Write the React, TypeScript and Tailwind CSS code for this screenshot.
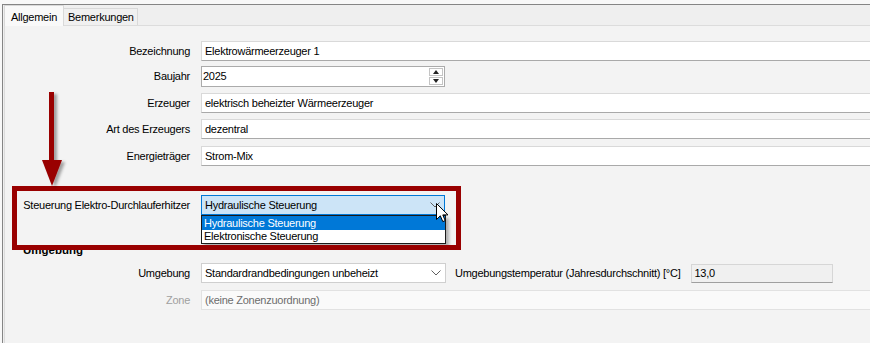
import type { ReactNode } from 'react';

// Windows-Forms-Dialog "Allgemein" mit aufgeklappter Steuerungs-Auswahl
const font = "font-['Liberation_Sans',Arial,sans-serif]";

function Label({ children, muted }: { children: ReactNode; muted?: boolean }) {
  return (
    <div className={`w-[186px] shrink-0 pr-[1px] text-right ${muted ? 'text-[#a0a0a0]' : 'text-black'}`}>
      {children}
    </div>
  );
}

function TextBox({ value }: { value: string }) {
  return (
    <div className="ml-[10px] flex h-[20px] w-[700px] shrink-0 items-center border border-[#d9d9d9] border-b-[#a9a9a9] bg-white pl-[3px]">
      {value}
    </div>
  );
}

function Chevron() {
  return (
    <svg width="10" height="6" viewBox="0 0 10 6" className="shrink-0">
      <polyline points="0.5,0.5 5,5 9.5,0.5" fill="none" stroke="#606060" strokeWidth="1" />
    </svg>
  );
}

export default function App() {
  return (
    <div className={`relative h-[343px] w-[870px] overflow-hidden bg-[#f8f8f8] pl-[2px] pt-[4px] text-[11px] tracking-[-0.25px] text-black ${font}`}>
      <div className="flex h-full flex-col border-l border-t border-[#858585] bg-[#efefef]">
        {/* Reiter */}
        <div className="flex h-[20px] shrink-0 items-end">
          <div className="relative z-10 -mb-px ml-[1px] flex h-[21px] w-[60px] items-start border border-b-0 border-[#d9d9d9] bg-[#f9f9f9] pl-[6px] pt-[3px]">
            Allgemein
          </div>
          <div className="flex h-[17px] w-[74px] items-center border border-l-0 border-b-0 border-[#d9d9d9] bg-[#f0f0f0] pl-[4px] pt-px">
            Bemerkungen
          </div>
        </div>

        {/* Inhalt */}
        <div className="ml-[1px] flex flex-1 flex-col border-l border-t border-[#dcdcdc] bg-[#f3f3f3]">
          <div className="mt-[15px] flex items-center">
            <Label>Bezeichnung</Label>
            <TextBox value="Elektrowärmeerzeuger 1" />
          </div>

          <div className="mt-[5px] flex items-center">
            <Label>Baujahr</Label>
            <div className="ml-[10px] flex h-[21px] w-[244px] shrink-0 items-center justify-between border border-[#ababab] bg-white pl-[1px] pr-px">
              <span>2025</span>
              <div className="flex flex-col gap-px">
                <div className="flex h-[8px] w-[14px] items-center justify-center border border-[#c4c4c4] bg-white">
                  <svg width="6" height="4" viewBox="0 0 6 4"><polygon points="3,0 6,4 0,4" fill="#222" /></svg>
                </div>
                <div className="flex h-[8px] w-[14px] items-center justify-center border border-[#c4c4c4] bg-white">
                  <svg width="6" height="4" viewBox="0 0 6 4"><polygon points="0,0 6,0 3,4" fill="#222" /></svg>
                </div>
              </div>
            </div>
          </div>

          <div className="mt-[6px] flex items-center">
            <Label>Erzeuger</Label>
            <TextBox value="elektrisch beheizter Wärmeerzeuger" />
          </div>

          <div className="mt-[6px] flex items-center">
            <Label>Art des Erzeugers</Label>
            <TextBox value="dezentral" />
          </div>

          <div className="mt-[7px] flex items-center">
            <Label>Energieträger</Label>
            <TextBox value="Strom-Mix" />
          </div>

          {/* Steuerung mit geöffneter Liste */}
          <div className="mt-[29px] flex items-center">
            <Label>Steuerung Elektro-Durchlauferhitzer</Label>
            <div className="relative ml-[10px] flex h-[20px] w-[244px] shrink-0 items-center justify-between border border-[#0078d7] bg-[#cce4f7] pl-[3px] pr-[4px]">
              <span>Hydraulische Steuerung</span>
              <Chevron />
              <div className="absolute left-[-1px] top-[19px] z-20 w-[245px] border border-[#1a1a1a] bg-white shadow-[3px_3px_3px_rgba(0,0,0,0.28)]">
                <div className="flex h-[14px] items-center bg-[#0078d7] pl-[2px] text-white">Hydraulische Steuerung</div>
                <div className="flex h-[13px] items-center pl-[2px]">Elektronische Steuerung</div>
              </div>
            </div>
          </div>

          <div className="mt-[28px] h-[14px] pl-[18px] text-[11.5px] font-bold leading-[14px] tracking-normal">Umgebung</div>

          <div className="mt-[6px] flex items-center">
            <Label>Umgebung</Label>
            <div className="ml-[10px] flex h-[20px] w-[245px] shrink-0 items-center justify-between border border-[#cfcfcf] bg-white pl-[3px] pr-[4px]">
              <span>Standardrandbedingungen unbeheizt</span>
              <Chevron />
            </div>
            <div className="ml-[9px] shrink-0">Umgebungstemperatur (Jahresdurchschnitt) [°C]</div>
            <div className="ml-[11px] flex h-[19px] w-[142px] shrink-0 items-center border border-[#d6d6d6] border-b-[#9f9f9f] bg-[#f0f0f0] pl-[2px]">
              13,0
            </div>
          </div>

          <div className="mt-[7px] flex items-center">
            <Label muted>Zone</Label>
            <div className="ml-[10px] flex h-[20px] w-[700px] shrink-0 items-center border border-[#e2e2e2] bg-[#fafafa] pl-[3px] text-[#6d6d6d]">
              (keine Zonenzuordnung)
            </div>
          </div>
        </div>
      </div>

      {/* Markierung */}
      <div className="pointer-events-none absolute left-[12px] top-[186px] z-30 h-[64px] w-[449px] border-[5px] border-[#990000]" />

      {/* Pfeil */}
      <svg className="pointer-events-none absolute left-[36px] top-[88px] z-30" width="34" height="104" viewBox="0 0 34 104">
        <defs>
          <filter id="sh" x="-50%" y="-20%" width="200%" height="140%">
            <feDropShadow dx="3" dy="2" stdDeviation="1.6" floodColor="#000" floodOpacity="0.35" />
          </filter>
        </defs>
        <g filter="url(#sh)" fill="#990000">
          <rect x="13" y="4" width="5" height="70" />
          <polygon points="6,72 26,72 16,98" />
        </g>
      </svg>

      {/* Mauszeiger */}
      <svg className="pointer-events-none absolute left-[436px] top-[203px] z-40" width="13" height="20" viewBox="0 0 13 20">
        <path d="M0.5 0.5 L0.5 16.5 L4.3 12.8 L6.8 18.6 L9.2 17.6 L6.8 11.9 L12 11.9 Z" fill="#fff" stroke="#000" strokeWidth="1" strokeLinejoin="round" />
      </svg>
    </div>
  );
}
